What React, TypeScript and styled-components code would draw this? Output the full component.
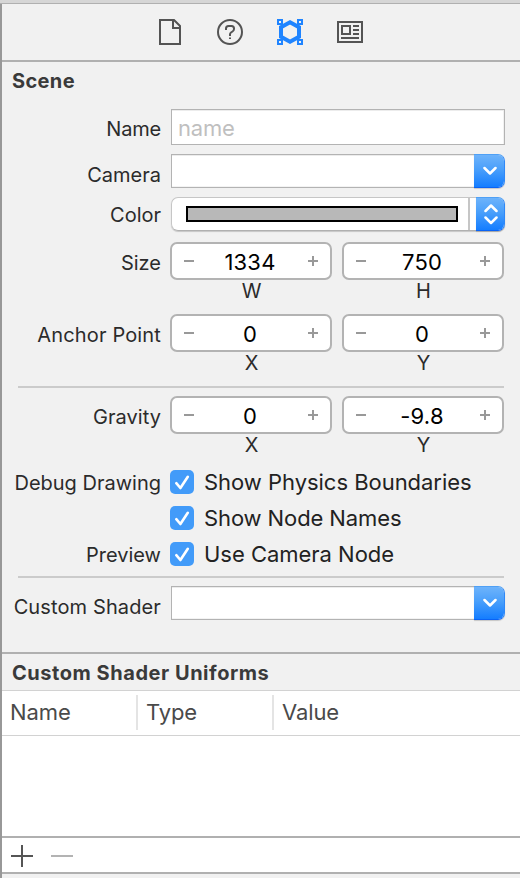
import React from 'react';
import styled, { createGlobalStyle } from 'styled-components';

const Global = createGlobalStyle`
  * { box-sizing: border-box; }
  body { margin: 0; background: #f1f1f1; }
`;

const Window = styled.div`
  width: 520px;
  height: 878px;
  overflow: hidden;
  display: flex;
  flex-direction: column;
  background: #f1f1f1;
  font-family: Inter, 'Liberation Sans', sans-serif;
  color: #2b2b2b;
  white-space: nowrap;
`;

const TopStrip = styled.div`
  height: 4px;
  flex: none;
  background: #d6d6d6;
  border-bottom: 1px solid #b0b0b0;
`;

const Inspector = styled.main`
  flex: 1;
  display: flex;
  flex-direction: column;
  border-left: 2px solid #989898;
`;

const Toolbar = styled.nav`
  height: 58px;
  display: flex;
  justify-content: center;
  gap: 32px;
  padding: 14px 2px 0 0;
  border-bottom: 2px solid #b0b0b0;
`;

const TabButton = styled.button<{ $active?: boolean }>`
  width: 28px;
  height: 28px;
  padding: 0;
  border: 0;
  background: none;
  color: ${(p) => (p.$active ? '#1f84ff' : '#545454')};
  svg { display: block; }
`;

const SceneSection = styled.section`
  height: 592px;
  border-bottom: 2px solid #b0b0b0;
`;

const Heading = styled.h2<{ $spacing: string }>`
  margin: 0;
  padding-left: 10px;
  height: 36px;
  font-size: 20px;
  font-weight: 700;
  line-height: 39px;
  letter-spacing: ${(p) => p.$spacing};
  color: #3a3a3a;
`;

const Form = styled.div`
  padding: 11px 14px 0 0;
  display: flex;
  flex-direction: column;
`;

const Row = styled.div<{ $after: number }>`
  display: grid;
  grid-template-columns: 159px 1fr;
  column-gap: 7px;
  margin-bottom: ${(p) => p.$after}px;
`;

const Label = styled.label<{ $drop: number; $spacing?: string }>`
  margin-top: ${(p) => p.$drop}px;
  font-size: 20px;
  line-height: 24px;
  height: 24px;
  text-align: right;
  letter-spacing: ${(p) => p.$spacing ?? '0'};
`;

const TextField = styled.input`
  width: 334px;
  height: 36px;
  margin: 0 0 0 3px;
  padding: 2px 6px 0;
  border: 1px solid #b3b3b3;
  border-radius: 0;
  box-shadow: inset 0 1px #ececec, inset -1px 0 #f1f1f1;
  background: #fff;
  font: 22px Inter, sans-serif;
  letter-spacing: -0.2px;
  outline: none;
  &::placeholder { color: #bfbfbf; opacity: 1; }
`;

const Combo = styled.div`
  display: flex;
  width: 334px;
  height: 34px;
  margin-left: 3px;
`;

const ComboField = styled.div`
  flex: 1;
  background: #fff;
  border: 1px solid #b3b3b3;
  border-right: 0;
  box-shadow: inset 0 1px #ececec, inset 0 -1px #f3f3f3;
`;

const BlueButton = styled.button<{ $width: number }>`
  width: ${(p) => p.$width}px;
  height: 34px;
  padding: 0 0 0 1px;
  border: 1px solid;
  border-color: #4fa0f5 #2f88f8 #0a63f5 #2f88f8;
  border-left-width: 0;
  border-radius: 0 7px 7px 0;
  background: linear-gradient(#6db3fb, #499ffb 45%, #147dff) padding-box;
  box-shadow: 0 1px 1px rgba(0, 0, 0, 0.18);
  display: flex;
  align-items: center;
  justify-content: center;
  flex: none;
`;

const ColorPopup = styled.div`
  display: flex;
  width: 334px;
  height: 34px;
  margin-left: 3px;
  border-radius: 7px;
  box-shadow: 0 1px 1px rgba(0, 0, 0, 0.18);
`;

const ColorWell = styled.div`
  flex: 1;
  display: flex;
  background: #fff;
  border: 1px solid #c6c6c6;
  border-bottom-color: #b0b0b0;
  border-right: 0;
  border-radius: 7px 0 0 7px;
  padding-left: 14px;
`;

const Swatch = styled.div`
  width: 272px;
  height: 16px;
  margin: 8px 10px 0 0;
  border: 2px solid #000;
  background: #b8b8b8;
`;

const WellDivider = styled.div`
  width: 2px;
  background: #c6c6c6;
`;

const StepperPair = styled.div`
  display: flex;
  gap: 10px;
  padding-left: 2px;
`;

const StepperCell = styled.div`
  width: 162px;
  text-align: center;
`;

const StepperBox = styled.div`
  height: 38px;
  display: flex;
  justify-content: space-between;
  align-items: center;
  padding: 0 12px;
  border: 2px solid #b3b3b3;
  border-radius: 7px;
  background: #fff;
`;

const StepperValue = styled.span`
  font-size: 22px;
  line-height: 34px;
  padding: 2px 2px 0 0;
  letter-spacing: 0.2px;
  color: #000;
`;

const StepperCaption = styled.div`
  height: 24px;
  font-size: 20px;
  line-height: 22px;
  padding-left: 1px;
`;

const Divider = styled.hr<{ $after: number }>`
  width: 486px;
  height: 2px;
  border: 0;
  margin: 0 0 ${(p) => p.$after}px 16px;
  background: #cbcbcb;
`;

const CheckLine = styled.div<{ $spacing: string }>`
  display: flex;
  align-items: center;
  gap: 10px;
  height: 24px;
  padding-left: 2px;
  font-size: 22px;
  line-height: 26px;
  letter-spacing: ${(p) => p.$spacing};
  color: #222;
`;

const CheckBox = styled.span`
  width: 24px;
  height: 24px;
  border-radius: 5px;
  background: #429bf9;
  svg { display: block; }
`;

const UniformsSection = styled.section`
  height: 220px;
  display: flex;
  flex-direction: column;
  border-bottom: 2px solid #b0b0b0;
`;

const TableHead = styled.div`
  height: 46px;
  display: flex;
  padding-top: 4px;
  background: #fff;
  border-top: 1px solid #d2d2d2;
  border-bottom: 1px solid #d2d2d2;
`;

const TableHeadCell = styled.div<{ $width: number; $pad: number; $last?: boolean }>`
  width: ${(p) => p.$width}px;
  height: 35px;
  padding-left: ${(p) => p.$pad}px;
  border-right: ${(p) => (p.$last ? '0' : '2px solid #e4e4e4')};
  font-size: 22px;
  line-height: 35px;
  letter-spacing: -0.1px;
  color: #4a4a4a;
`;

const TableBody = styled.div`
  flex: 1;
  background: #fff;
`;

const TableFooter = styled.div`
  height: 36px;
  display: flex;
  gap: 18px;
  padding: 7px 0 0 9px;
  background: #fff;
  border-top: 2px solid #b0b0b0;
`;

const FootButton = styled.button`
  width: 22px;
  height: 22px;
  padding: 0;
  border: 0;
  background: none;
  svg { display: block; }
`;

const DocumentIcon = () => (
  <svg width="28" height="28" fill="none" stroke="currentColor" strokeWidth="2">
    <path d="M4 2H18L24 8V26H4Z" />
    <path d="M17 3V10H23" />
  </svg>
);

const HelpIcon = () => (
  <svg width="28" height="28" fill="none" stroke="currentColor" strokeWidth="2">
    <circle cx="14" cy="14" r="12" />
    <path d="M10 12V10.5Q10 8 12.5 8H15.5Q18 8 18 10.5V11Q18 12.5 16.5 13.5L15 14.5Q14 15.2 14 16.5V18M14 19.5V21" />
  </svg>
);

const NodeIcon = () => (
  <svg width="28" height="28" fill="none" stroke="currentColor">
    <path d="M14 4.3L23 9.2V18.8L14 23.7L5 18.8V9.2Z" strokeWidth="4" />
    {[[2, 2], [22, 2], [2, 22], [22, 22]].map(([x, y]) => (
      <rect key={`${x}-${y}`} x={x} y={y} width="4" height="4" fill="#f1f1f1" strokeWidth="2" />
    ))}
  </svg>
);

const NewsIcon = () => (
  <svg width="28" height="28" fill="none" stroke="currentColor" strokeWidth="2">
    <rect x="2" y="4" width="24" height="20" />
    <rect x="6" y="8" width="8" height="8" />
    <path d="M17 8H23M17 12H23M17 16H23M5 20H23" />
  </svg>
);

const Minus = () => (
  <svg width="10" height="10"><path d="M0 5H10" stroke="#999" strokeWidth="2" /></svg>
);

const Plus = () => (
  <svg width="10" height="10"><path d="M0 5H10M5 0V10" stroke="#999" strokeWidth="2" /></svg>
);

const ComboBox = () => (
  <Combo>
    <ComboField />
    <BlueButton $width={31} aria-label="Choose">
      <svg width="14" height="10" fill="none" stroke="#fff" strokeWidth="2.5" strokeLinecap="round" strokeLinejoin="round">
        <path d="M1.5 2L7 7.5L12.5 2" />
      </svg>
    </BlueButton>
  </Combo>
);

const Stepper = ({ value, caption }: { value: string; caption: string }) => (
  <StepperCell>
    <StepperBox>
      <Minus />
      <StepperValue>{value}</StepperValue>
      <Plus />
    </StepperBox>
    <StepperCaption>{caption}</StepperCaption>
  </StepperCell>
);

const Check = ({ text, spacing }: { text: string; spacing: string }) => (
  <CheckLine $spacing={spacing}>
    <CheckBox>
      <svg width="24" height="24" fill="none" stroke="#fff" strokeWidth="2.6" strokeLinecap="round" strokeLinejoin="round">
        <path d="M6.3 13.2L10.4 18L17.8 6.8" />
      </svg>
    </CheckBox>
    {text}
  </CheckLine>
);

export default function App() {
  return (
    <Window>
      <Global />
      <TopStrip />
      <Inspector>
        <Toolbar>
          <TabButton aria-label="File"><DocumentIcon /></TabButton>
          <TabButton aria-label="Help"><HelpIcon /></TabButton>
          <TabButton aria-label="Attributes" $active><NodeIcon /></TabButton>
          <TabButton aria-label="Details"><NewsIcon /></TabButton>
        </Toolbar>
        <SceneSection>
          <Heading $spacing="0.35px">Scene</Heading>
          <Form>
            <Row $after={9}>
              <Label $drop={8} $spacing="-0.2px">Name</Label>
              <TextField placeholder="name" />
            </Row>
            <Row $after={9}>
              <Label $drop={9}>Camera</Label>
              <ComboBox />
            </Row>
            <Row $after={11}>
              <Label $drop={6}>Color</Label>
              <ColorPopup>
                <ColorWell>
                  <Swatch />
                  <WellDivider />
                </ColorWell>
                <BlueButton $width={29} aria-label="Choose color">
                  <svg width="14" height="22" fill="none" stroke="#fff" strokeWidth="2.5" strokeLinecap="round" strokeLinejoin="round">
                    <path d="M1.5 8L7 2.5L12.5 8M1.5 14.5L7 20L12.5 14.5" />
                  </svg>
                </BlueButton>
              </ColorPopup>
            </Row>
            <Row $after={10}>
              <Label $drop={9}>Size</Label>
              <StepperPair>
                <Stepper value="1334" caption="W" />
                <Stepper value="750" caption="H" />
              </StepperPair>
            </Row>
            <Row $after={10}>
              <Label $drop={9} $spacing="0.15px">Anchor Point</Label>
              <StepperPair>
                <Stepper value="0" caption="X" />
                <Stepper value="0" caption="Y" />
              </StepperPair>
            </Row>
            <Divider $after={8} />
            <Row $after={12}>
              <Label $drop={9} $spacing="0.05px">Gravity</Label>
              <StepperPair>
                <Stepper value="0" caption="X" />
                <Stepper value="-9.8" caption="Y" />
              </StepperPair>
            </Row>
            <Row $after={11}>
              <Label $drop={1}>Debug Drawing</Label>
              <Check text="Show Physics Boundaries" spacing="-0.03px" />
            </Row>
            <Row $after={12}>
              <span />
              <Check text="Show Node Names" spacing="-0.1px" />
            </Row>
            <Row $after={9}>
              <Label $drop={1}>Preview</Label>
              <Check text="Use Camera Node" spacing="-0.02px" />
            </Row>
            <Divider $after={8} />
            <Row $after={0}>
              <Label $drop={9} $spacing="0.12px">Custom Shader</Label>
              <ComboBox />
            </Row>
          </Form>
        </SceneSection>
        <UniformsSection>
          <Heading $spacing="0.54px">Custom Shader Uniforms</Heading>
          <TableHead>
            <TableHeadCell $width={136} $pad={8}>Name</TableHeadCell>
            <TableHeadCell $width={136} $pad={8}>Type</TableHeadCell>
            <TableHeadCell $width={246} $pad={8} $last>Value</TableHeadCell>
          </TableHead>
          <TableBody />
          <TableFooter>
            <FootButton aria-label="Add">
              <svg width="22" height="22"><path d="M0 11H22M11 0V22" stroke="#555" strokeWidth="2" /></svg>
            </FootButton>
            <FootButton aria-label="Remove">
              <svg width="22" height="22"><path d="M0 11H22" stroke="#b3b3b3" strokeWidth="2" /></svg>
            </FootButton>
          </TableFooter>
        </UniformsSection>
      </Inspector>
    </Window>
  );
}
